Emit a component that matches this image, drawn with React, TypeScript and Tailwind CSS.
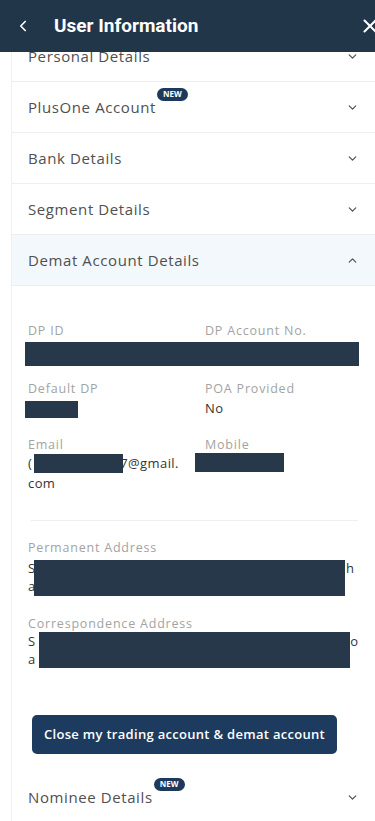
import React from "react";
import { ChevronDown, ChevronUp, ChevronLeft, X } from "lucide-react";

const font = { fontFamily: '"Open Sans", "Liberation Sans", sans-serif' };

function Badge() {
  return (
    <span className="ml-[1px] -translate-y-[13px] inline-flex h-[13px] w-[31px] items-center justify-center rounded-full bg-[#1d3a5c] text-[8px] font-bold leading-none tracking-normal text-white">
      NEW
    </span>
  );
}

function Row({
  title,
  badge,
  open,
  bg,
}: {
  title: string;
  badge?: boolean;
  open?: boolean;
  bg?: string;
}) {
  return (
    <div
      className={`flex h-[51px] items-center border-b border-[#eeeeee] pl-[16px] pr-[16px] ${bg ?? ""}`}
    >
      <div className="flex items-center text-[15px] tracking-[0.6px] text-[#505050]">
        <span>{title}</span>
        {badge && <Badge />}
      </div>
      <div className="ml-auto text-[#555]">
        {open ? (
          <ChevronUp size={13} strokeWidth={2.4} />
        ) : (
          <ChevronDown size={13} strokeWidth={2.4} />
        )}
      </div>
    </div>
  );
}

const Box = ({ className }: { className: string }) => (
  <div className={`bg-[#263849] ${className}`} />
);

export default function App() {
  return (
    <div className="relative h-[821px] w-[375px] overflow-hidden bg-white" style={font}>
      {/* header */}
      <div className="relative z-10 flex h-[52px] items-center bg-[#22364a] text-white" style={{ fontFamily: 'Roboto, "Liberation Sans", sans-serif' }}>
        <ChevronLeft size={18} strokeWidth={2.2} className="ml-[14px]" />
        <span className="ml-[22px] text-[19px] font-bold">User Information</span>
        <X size={22} strokeWidth={2.2} className="ml-auto -mr-[6px]" />
      </div>

      <div className="-mt-[21px] pl-[11px]">
        <div className="border-l border-[#f0f0f0]">
          <Row title="Personal Details" />
          <Row title="PlusOne Account" badge />
          <Row title="Bank Details" />
          <Row title="Segment Details" />
          <Row title="Demat Account Details" open bg="bg-[#f3f8fc]" />

          {/* demat content */}
          <div className="pl-[16px] pr-[17px] pt-[37px] text-[12.5px]">
            <div className="grid grid-cols-[177px_1fr] leading-[16px] tracking-[0.8px] text-[#a3a3a3]">
              <span>DP ID</span>
              <span>DP Account No.</span>
            </div>
            <Box className="-ml-[3px] mt-[3px] h-[24px] w-[334px]" />

            <div className="mt-[15px] grid grid-cols-[177px_1fr]">
              <div>
                <div className="leading-[16px] tracking-[0.8px] text-[#a3a3a3]">Default DP</div>
                <Box className="-ml-[3px] mt-[4px] h-[17px] w-[53px]" />
              </div>
              <div>
                <div className="leading-[16px] tracking-[0.8px] text-[#a3a3a3]">POA Provided</div>
                <div className="mt-[2px] text-[13px] font-medium leading-[18px] tracking-[0.4px] text-[#333]">No</div>
              </div>
            </div>

            <div className="mt-[19px] grid grid-cols-[177px_1fr]">
              <div>
                <div className="leading-[16px] tracking-[0.8px] text-[#a3a3a3]">Email</div>
                <div className="text-[13px] leading-[20px] tracking-[0.4px] text-[#333]">
                  <div className="flex items-center">
                    <span>(</span>
                    <Box className="ml-[2px] h-[19px] w-[89px]" />
                    <span className="-ml-[3px]">7@gmail.</span>
                  </div>
                  <div>com</div>
                </div>
              </div>
              <div>
                <div className="leading-[16px] tracking-[0.8px] text-[#a3a3a3]">Mobile</div>
                <Box className="-ml-[10px] mt-[0px] h-[19px] w-[89px]" />
              </div>
            </div>

            <div className="ml-[3px] mt-[27px] border-t border-[#eeeeee]" />

            <div className="mt-[19px] leading-[16px] tracking-[0.8px] text-[#a3a3a3]">Permanent Address</div>
            <div className="relative mt-[3px] text-[13px] leading-[18px] text-[#333]">
              <div className="flex justify-between pr-[4px]"><span>S</span><span>h</span></div>
              <div>a</div>
              <Box className="absolute left-[6px] top-[1px] h-[36px] w-[311px]" />
            </div>

            <div className="mt-[21px] leading-[16px] tracking-[0.8px] text-[#a3a3a3]">Correspondence Address</div>
            <div className="relative mt-[0px] text-[13px] leading-[18px] text-[#333]">
              <div className="flex justify-between"><span>S</span><span>o</span></div>
              <div>a</div>
              <Box className="absolute left-[11px] top-[0px] h-[36px] w-[311px]" />
            </div>

            <button className="ml-[4px] mt-[47px] flex h-[39px] w-[305px] items-center justify-center rounded-[5px] bg-[#1c3b5e] text-[13px] font-semibold tracking-[0.3px] text-white">
              Close my trading account &amp; demat account
            </button>
          </div>

          <div className="mt-[18px]">
            <Row title="Nominee Details" badge />
          </div>
        </div>
      </div>
    </div>
  );
}
